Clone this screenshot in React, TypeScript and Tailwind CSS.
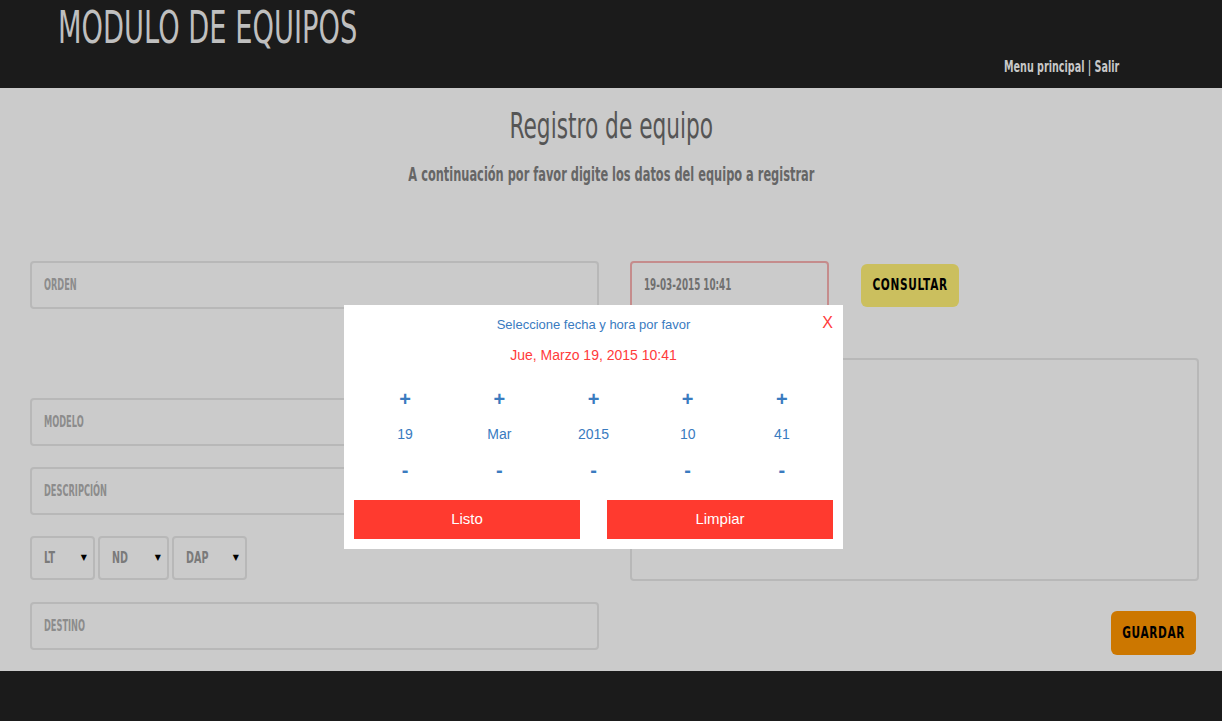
import React from "react";

const cond = {
  fontFamily: "'DejaVu Sans',sans-serif",
};

function N({ c, children }: { c: string; children: React.ReactNode }) {
  return <span className={`inline-block whitespace-nowrap ${c}`}>{children}</span>;
}

function Field({ label, className = "" }: { label: string; className?: string }) {
  return (
    <div className={`h-[48px] border-2 border-[#b8b8b8] rounded-[4px] flex items-center px-[12px] text-[15px] font-bold text-[#8c8c8c] ${className}`}>
      <N c="origin-left scale-x-[0.55]">{label}</N>
    </div>
  );
}

function Sel({ label, w }: { label: string; w: string }) {
  return (
    <div className={`${w} h-[44px] border-2 border-[#b8b8b8] rounded-[4px] flex items-center justify-between pl-[12px] pr-[6px] text-[16px] font-bold text-[#7a7a7a]`}>
      <N c="origin-left scale-x-[0.6]">{label}</N>
      <span className="text-[8px] text-black">▼</span>
    </div>
  );
}

export default function App() {
  const cols = ["19", "Mar", "2015", "10", "41"];
  return (
    <div className="w-[1222px] h-[721px] relative bg-[#cbcbcb] overflow-hidden" style={cond}>
      <header className="h-[88px] bg-[#1b1b1b] relative">
        <div className="absolute left-[58px] top-[3px] text-[44px] leading-[50px] text-[#bfbfbf]">
          <N c="origin-left scale-x-[0.62]">MODULO DE EQUIPOS</N>
        </div>
        <div className="absolute left-[1004px] top-[58px] text-[15px] leading-[18px] font-bold text-[#c8c8c8]">
          <N c="origin-left scale-x-[0.64]">Menu principal | Salir</N>
        </div>
      </header>
      <main className="h-[583px] flex flex-col">
        <h1 className="text-center text-[35px] leading-[40px] text-[#555] mt-[18px]">
          <N c="scale-x-[0.62]">Registro de equipo</N>
        </h1>
        <p className="text-center text-[19px] leading-[22px] text-[#666] mt-[17px] font-bold">
          <N c="scale-x-[0.6]">A continuación por favor digite los datos del equipo a registrar</N>
        </p>
        <div className="flex gap-[31px] pl-[30px] mt-[76px]">
          <div className="w-[569px] flex flex-col">
            <Field label="ORDEN" />
            <div className="h-[89px]" />
            <Field label="MODELO" />
            <div className="h-[21px]" />
            <Field label="DESCRIPCIÓN" />
            <div className="h-[21px]" />
            <div className="flex gap-[3px]">
              <Sel label="LT" w="w-[65px]" />
              <Sel label="ND" w="w-[71px]" />
              <Sel label="DAP" w="w-[75px]" />
            </div>
            <div className="h-[22px]" />
            <Field label="DESTINO" />
          </div>
          <div className="w-[569px] flex flex-col">
            <div className="flex items-center gap-[32px]">
              <div className="w-[199px] h-[48px] border-2 border-[#c58c8c] rounded-[4px] flex items-center px-[12px] text-[16px] font-bold text-[#707070]">
                <N c="origin-left scale-x-[0.55]">19-03-2015 10:41</N>
              </div>
              <div className="h-[43px] w-[98px] bg-[#cbbf5e] rounded-[6px] flex items-center justify-center text-[16px] font-bold text-black tracking-[1px]">
                <N c="scale-x-[0.66]">CONSULTAR</N>
              </div>
            </div>
            <div className="h-[49px]" />
            <div className="h-[223px] border-2 border-[#b8b8b8] rounded-[4px]" />
            <div className="flex justify-end mt-[30px] pr-[3px]">
              <div className="h-[44px] w-[85px] bg-[#cc7700] rounded-[6px] flex items-center justify-center text-[16px] font-bold text-black tracking-[1px]">
                <N c="scale-x-[0.66]">GUARDAR</N>
              </div>
            </div>
          </div>
        </div>
      </main>
      <footer className="h-[50px] bg-[#1b1b1b]" />

      <div className="absolute left-[344px] top-[305px] w-[499px] h-[244px] bg-white" style={{ fontFamily: "'Liberation Sans',Arial,sans-serif" }}>
        <div className="flex flex-col items-center">
          <div className="mt-[12px] text-[13px] leading-[16px] text-[#3a7bbf]">Seleccione fecha y hora por favor</div>
          <div className="absolute right-[10px] top-[9px] text-[16px] leading-[18px] text-[#ff3b3b]">X</div>
          <div className="mt-[13px] text-[14px] leading-[18px] text-[#ff3b3b]">Jue, Marzo 19, 2015 10:41</div>
        </div>
        <div className="grid grid-cols-5 mx-[14px] mt-[17px]">
          {cols.map((v, i) => (
            <div key={i} className="flex flex-col items-center text-[#3a7bbf]">
              <div className="h-[36px] flex items-center text-[20px] font-bold leading-none">+</div>
              <div className="h-[34px] flex items-center text-[14px] leading-none">{v}</div>
              <div className="h-[38px] flex items-center text-[20px] font-bold leading-none">-</div>
            </div>
          ))}
        </div>
        <div className="flex justify-between px-[10px] mt-[11px]">
          <div className="w-[226px] h-[39px] bg-[#ff3a2f] text-white text-[15px] flex items-center justify-center">Listo</div>
          <div className="w-[226px] h-[39px] bg-[#ff3a2f] text-white text-[15px] flex items-center justify-center">Limpiar</div>
        </div>
      </div>
    </div>
  );
}
